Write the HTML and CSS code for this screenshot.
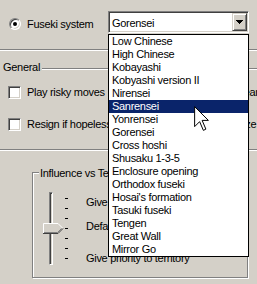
FILE: index.html
```html
<!DOCTYPE html>
<html>
<head>
<meta charset="utf-8">
<title>Fuseki</title>
<link rel="stylesheet" href="styles.css">
</head>
<body>
<div class="dlg">
  <div class="top">
    <label class="opt"><span class="radio"></span><span>Fuseki system</span></label>
    <div class="combo">
      <span class="combo-text">Gorensei</span>
      <span class="combo-btn"><svg width="7" height="4" viewBox="0 0 7 4"><rect x="0" y="0" width="7" height="1"/><rect x="1" y="1" width="5" height="1"/><rect x="2" y="2" width="3" height="1"/><rect x="3" y="3" width="1" height="1"/></svg></span>
    </div>
  </div>
  <div class="sep"></div>
  <div class="group-head"><span>General</span><span class="rule"></span></div>
  <div class="check-row">
    <label class="opt"><span class="check"></span><span>Play risky moves</span></label>
    <span class="col2">Near</span>
  </div>
  <div class="check-row second">
    <label class="opt"><span class="check"></span><span>Resign if hopeless</span></label>
    <span class="col2">Size</span>
  </div>
  <div class="sep sep2"></div>
  <div class="box">
    <div class="box-title">Influence vs Territory</div>
    <div class="slider-area">
      <div class="rail">
        <div class="track"></div>
        <svg class="thumb" width="21" height="11" viewBox="0 0 21 11">
          <path d="M0 0H15L20 5V6L15 11H0Z" fill="#d4d0c8"/>
          <path d="M0.5 10V0.5H15L19.5 5" stroke="#fff" fill="none"/>
          <path d="M0 10.5H15L20 5.5" stroke="#404040" fill="none"/>
          <path d="M1 9.5H14.5L18.5 5.5" stroke="#808080" fill="none"/>
        </svg>
      </div>
      <div class="ticks"><i></i><i></i><i></i><i></i><i></i><i></i><i></i></div>
      <div class="labels">
        <span class="l1">Give priority to influence</span>
        <span class="l2">Default</span>
        <span class="l3">Give priority to territory</span>
      </div>
    </div>
  </div>
</div>
<ul class="list">
  <li>Low Chinese</li>
  <li>High Chinese</li>
  <li>Kobayashi</li>
  <li>Kobyashi version II</li>
  <li>Nirensei</li>
  <li class="sel">Sanrensei</li>
  <li>Yonrensei</li>
  <li>Gorensei</li>
  <li>Cross hoshi</li>
  <li>Shusaku 1-3-5</li>
  <li>Enclosure opening</li>
  <li>Orthodox fuseki</li>
  <li>Hosai's formation</li>
  <li>Tasuki fuseki</li>
  <li>Tengen</li>
  <li>Great Wall</li>
  <li>Mirror Go</li>
</ul>
<svg class="cursor" width="15" height="25" viewBox="0 0 12 20" preserveAspectRatio="none">
  <path d="M0.5 0.5V16.5L4.5 12.5L7.5 19.5L9.5 18.5L6.5 11.5H11.5Z" fill="#fff" stroke="#000" stroke-width="0.8"/>
</svg>
</body>
</html>
```
FILE: styles.css
```css
* { box-sizing: border-box; }
html, body { margin: 0; padding: 0; }
body {
  width: 257px;
  height: 284px;
  overflow: hidden;
  position: relative;
  background: #d4d0c8;
  color: #000;
  font: 11px/13px "Liberation Sans", Arial, sans-serif;
  letter-spacing: -0.3px;
}
.dlg { padding-top: 11px; }

.top { display: flex; height: 22px; }
.opt { display: flex; align-items: center; white-space: nowrap; }
.top .opt { margin: 7px 0 0 9px; height: 12px; width: 99px; gap: 6px; }

.radio {
  flex: none;
  width: 12px; height: 12px;
  border-radius: 50%;
  border: 1px solid;
  border-color: #808080 #fff #fff #808080;
  box-shadow: inset 1px 1px 0 #404040, inset -1px -1px 0 #d4d0c8;
  background: #fff;
  display: flex; align-items: center; justify-content: center;
}
.radio::after { content: ""; width: 4px; height: 4px; border-radius: 50%; background: #000; }

.combo {
  width: 141px; height: 22px;
  border: 1px solid;
  border-color: #808080 #fff #fff #808080;
  box-shadow: inset 1px 1px 0 #404040, inset -1px -1px 0 #d4d0c8;
  background: #fff;
  padding: 1px;
  display: flex;
}
.combo-text { flex: 1; padding: 2px 0 0 2px; line-height: 16px; }
.combo-btn {
  flex: none;
  width: 15px;
  border: 1px solid;
  border-color: #d4d0c8 #404040 #404040 #d4d0c8;
  box-shadow: inset 1px 1px 0 #fff, inset -1px -1px 0 #808080;
  background: #d4d0c8;
  display: flex; align-items: center; justify-content: center;
}
.combo-btn svg { fill: #000; display: block; }

.sep { height: 2px; border-top: 1px solid #808080; border-bottom: 1px solid #fff; margin-top: 16px; }
.sep2 { margin-top: 18px; }

.group-head { display: flex; align-items: flex-start; margin-top: 10px; padding-left: 3px; height: 13px; white-space: nowrap; }
.group-head .rule { flex: 1; height: 2px; margin: 7px 0 0 2px; border-top: 1px solid #808080; border-bottom: 1px solid #fff; }

.check-row { display: grid; grid-template-columns: 228px 21px; height: 13px; margin-top: 12px; padding-left: 8px; white-space: nowrap; }
.check-row.second { margin-top: 19px; }
.check-row .opt { gap: 6px; overflow: hidden; }
.col2 { overflow: hidden; }
.check {
  flex: none;
  width: 13px; height: 13px;
  border: 1px solid;
  border-color: #808080 #fff #fff #808080;
  box-shadow: inset 1px 1px 0 #404040, inset -1px -1px 0 #d4d0c8;
  background: #fff;
}

.box {
  margin: 21px 0 0 32px;
  width: 216px; height: 106px;
  border: 1px solid #808080;
  box-shadow: 1px 1px 0 #fff, inset 1px 1px 0 #fff;
}
.box-title { width: max-content; margin: -6px 0 0 6px; padding: 0 1px; background: #d4d0c8; }

.slider-area { display: flex; align-items: flex-start; margin-top: 12px; padding-left: 10px; }
.rail { display: grid; width: 21px; }
.rail > * { grid-area: 1 / 1; }
.track {
  width: 4px; height: 73px; margin-left: 6px;
  border: 1px solid;
  border-color: #808080 #fff #fff #808080;
  box-shadow: inset 1px 1px 0 #404040;
  background: #d4d0c8;
}
.thumb { display: block; margin-top: 31px; }
.ticks { display: flex; flex-direction: column; gap: 9px; margin-left: 1px; padding-top: 6px; }
.ticks i { display: block; width: 3px; height: 1px; background: #000; }
.labels { display: flex; flex-direction: column; margin-left: 18px; white-space: nowrap; }
.labels .l1 { margin-top: 4px; }
.labels .l2 { margin-top: 11px; }
.labels .l3 { margin-top: 19px; }

.list {
  position: absolute;
  left: 108px; top: 34px;
  width: 141px;
  margin: 0; padding: 0;
  list-style: none;
  border: 1px solid #000;
  background: #fff;
}
.list li { height: 13px; padding-left: 3px; white-space: nowrap; }
.list li.sel { background: #0a246a; color: #fff; }

.cursor { position: absolute; left: 194px; top: 106px; display: block; }
```
